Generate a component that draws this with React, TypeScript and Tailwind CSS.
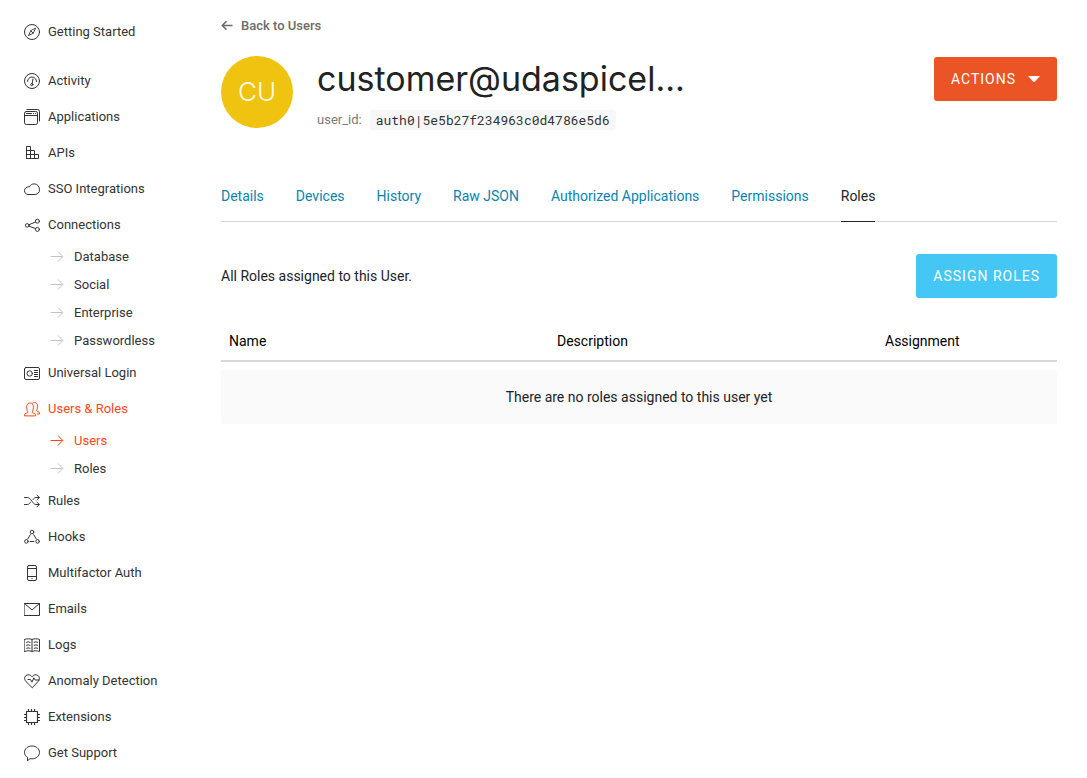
import type { ReactNode } from "react";

function Icon({ children }: { children: ReactNode }) {
  return (
    <svg
      viewBox="0 0 16 16"
      className="size-4 shrink-0"
      fill="none"
      stroke="currentColor"
      strokeWidth="1"
      strokeLinecap="round"
      strokeLinejoin="round"
      aria-hidden="true"
    >
      {children}
    </svg>
  );
}

const icons: Record<string, ReactNode> = {
  compass: (
    <>
      <circle cx="8" cy="8" r="7.5" />
      <path d="M11.6 4.4 9.2 9.2 4.4 11.6 6.8 6.8zM6.8 6.8l2.4 2.4" strokeWidth="0.9" />
    </>
  ),
  gauge: (
    <>
      <circle cx="8" cy="8" r="7.5" />
      <path d="M3.5 8.500a4.500 4.500 0 0 1 9 0M8.900 6 8.200 10.400" />
      <circle cx="7.800" cy="11.600" r="1.100" />
    </>
  ),
  windows: (
    <>
      <rect x="0.5" y="2.5" width="13" height="13" rx="1.8" />
      <path d="M0.5 6.5h13M3 .5h10.5a2 2 0 0 1 2 2V12" />
      <path d="M2.5 4.5h5M9.500 4.500h.2M11.500 4.500h.2" />
    </>
  ),
  blocks: (
    <path
      d="M2.500 1.500h4v12h-4zM2.500 5.500h8v8M2.500 9.500h12v4h-12M6.500 5.500v8M10.500 9.500v4"
      strokeLinejoin="miter"
      strokeLinecap="butt"
    />
  ),
  cloud: (
    <path d="M4.2 13.500h7A4.500 4.500 0 0 0 15.500 8.700c0-3.300-2.200-5.800-5.200-5.800C8 2.900 6.300 4 5.500 5.800 2.600 5.500.500 7.400.500 9.700c0 2.200 1.500 3.800 3.700 3.800z" />
  ),
  share: (
    <>
      <circle cx="3.2" cy="8.400" r="1.800" />
      <circle cx="13.400" cy="4.200" r="2" />
      <circle cx="13.400" cy="12.400" r="2" />
      <path d="m5 7.700 6.600-2.700M5 9.200l6.600 2.400" />
    </>
  ),
  card: (
    <>
      <rect x="0.5" y="2.500" width="15" height="12" rx="1.500" />
      <circle cx="5.700" cy="8.500" r="2.700" />
      <path d="M10 5.500h4M10 7.500h4M10 9.500h4M10 11.500h4" strokeLinecap="butt" />
    </>
  ),
  users: (
    <>
      <path d="M.5 14.500v-1.200c0-.900 3.400-1.100 3.400-2.200C3.200 10 2.800 8.700 2.600 6.600 2.400 3.700 3.700 2 6 2s3.600 1.700 3.400 4.600C9.200 8.700 8.800 10 8.100 11.100c0 1.100 3.400 1.300 3.400 2.200v1.200z" />
      <path d="M8.600 2.100C9.200 1.700 9.800 1.500 10.500 1.500c2 0 3.200 1.500 3 4.100-.1 1.900-.5 3.100-1.100 4 0 1.200 3.100 1.200 3.100 2.200v1.200h-2" />
    </>
  ),
  shuffle: (
    <path d="M.5 4.500h3c3.500 0 5 7 8.500 7h3M.5 11.500h3c1.300 0 2.200-1 3-2.100M9 6.500c.8-1.100 1.700-2 3-2h3.300M13 2.200l2.400 2.300L13 6.800M13 9.200l2.400 2.300-2.400 2.300" />
  ),
  hook: (
    <>
      <circle cx="8" cy="3" r="1.800" />
      <circle cx="2.400" cy="12.400" r="1.800" />
      <circle cx="13.600" cy="12.400" r="1.800" />
      <path d="M6.300 5.800 3.800 9.800M9.700 5.800l2.500 4M6.200 12.500h3.600" />
    </>
  ),
  phone: (
    <>
      <rect x="3.500" y="0.500" width="9" height="15" rx="1.500" />
      <path d="M3.500 3.500h9M3.500 11.500h9M8 13.500h.1" />
    </>
  ),
  mail: (
    <path d="M.5 2.500h15v12H.5zM.5 2.500 8 9l7.500-6.500" strokeLinejoin="miter" />
  ),
  book: (
    <>
      <path d="M.5 2.500C3 1.500 5.500 1.500 8 2.500c2.500-1 5-1 7.500 0v12c-2.500-1-5-1-7.500 0-2.500-1-5-1-7.500 0zM8 2.500v12" />
      <path d="M2.500 5.200q1.700-.8 3.400 0M2.500 8.200q1.700-.8 3.400 0M2.500 11.200q1.700-.8 3.400 0M10.200 5.200q1.700-.8 3.400 0M10.200 8.200q1.700-.8 3.400 0M10.200 11.200q1.700-.8 3.400 0" />
    </>
  ),
  heart: (
    <>
      <path d="M8 14.500 2 8.600C-.2 6 .6 3.500 2 2.500c2-1.400 4.700-.8 6 1.300 1.300-2.100 4-2.700 6-1.300 1.400 1 2.200 3.500 0 6.100z" />
      <path d="M4 6.500h2.500L8 9.200l1.800-4.400 1.400 2.200h4" />
    </>
  ),
  chip: (
    <path
      d="M2.500 2.500h11v11h-11zM4.500 0v2.500M7.500 0v2.500M10.500 0v2.500M4.500 13.500V16M7.500 13.500V16M10.500 13.500V16M0 5.500h2.500M0 8.500h2.500M0 11.500h2.500M13.500 5.500H16M13.500 8.500H16M13.500 11.500H16"
      strokeLinecap="butt"
      strokeWidth="1.2"
    />
  ),
  chat: (
    <path d="M3.500 15.500v-3.100C1.600 11.300.5 9.500.5 7.400.5 3.800 3.800 1 8 1s7.500 2.800 7.500 6.400-3.300 6.400-7.500 6.400c-.6 0-1.100 0-1.600-.1z" />
  ),
};

type NavEntry = { label: string; icon: string; children?: string[] };

const nav: NavEntry[] = [
  { label: "Activity", icon: "gauge" },
  { label: "Applications", icon: "windows" },
  { label: "APIs", icon: "blocks" },
  { label: "SSO Integrations", icon: "cloud" },
  {
    label: "Connections",
    icon: "share",
    children: ["Database", "Social", "Enterprise", "Passwordless"],
  },
  { label: "Universal Login", icon: "card" },
  { label: "Users & Roles", icon: "users", children: ["Users", "Roles"] },
  { label: "Rules", icon: "shuffle" },
  { label: "Hooks", icon: "hook" },
  { label: "Multifactor Auth", icon: "phone" },
  { label: "Emails", icon: "mail" },
  { label: "Logs", icon: "book" },
  { label: "Anomaly Detection", icon: "heart" },
  { label: "Extensions", icon: "chip" },
  { label: "Get Support", icon: "chat" },
];

const tabs = [
  "Details",
  "Devices",
  "History",
  "Raw JSON",
  "Authorized Applications",
  "Permissions",
  "Roles",
];

function NavItem({ label, icon, children }: NavEntry) {
  const active = label === "Users & Roles";
  return (
    <li>
      <a
        href="#"
        className={`flex h-9 items-center gap-2 ${active ? "text-[#ff4719]" : "text-[#333]"}`}
      >
        <Icon>{icons[icon]}</Icon>
        {label}
      </a>
      {children && (
        <ul>
          {children.map((child) => (
            <li key={child}>
              <a
                href="#"
                className={`flex h-7 items-center gap-2.5 pl-[26px] ${
                  child === "Users" ? "text-[#ff4719]" : "text-[#333]"
                }`}
              >
                <span className={child === "Users" ? "text-[#ff4719]" : "text-[#c4c4c4]"}>
                  <svg
                    viewBox="0 0 14 14"
                    className="size-3.5"
                    fill="none"
                    stroke="currentColor"
                    aria-hidden="true"
                  >
                    <path d="M.5 6.500h12M8 1.500l4.800 5L8 11.500" />
                  </svg>
                </span>
                {child}
              </a>
            </li>
          ))}
        </ul>
      )}
    </li>
  );
}

export default function App() {
  return (
    <div className="flex min-h-screen bg-white font-['Roboto','Liberation_Sans',sans-serif] text-sm text-[#222228]">
      <nav aria-label="Main" className="w-[221px] shrink-0 pt-3.5 pl-6 text-[13px]">
        <ul>
          <li className="mb-[13px]">
            <a href="#" className="flex h-9 items-center gap-2 text-[#333]">
              <Icon>{icons.compass}</Icon>
              Getting Started
            </a>
          </li>
          {nav.map((entry) => (
            <NavItem key={entry.label} {...entry} />
          ))}
        </ul>
      </nav>

      <main className="min-w-0 flex-1 pt-4 pr-[30px]">
        <a href="#" className="flex h-5 w-fit items-center gap-2 text-[13px] font-medium text-[#6b6b6b]">
          <svg
            viewBox="0 0 12 12"
            className="size-3"
            fill="none"
            stroke="currentColor"
            strokeWidth="1.6"
            aria-hidden="true"
          >
            <path d="M11.500 5.500H1.500M5.500 1.300 1.300 5.500l4.200 4.200" />
          </svg>
          Back to Users
        </a>

        <header className="mt-5 flex items-start gap-6">
          <div className="flex size-[72px] shrink-0 items-center justify-center rounded-full bg-[#f0c310] font-['Inter',sans-serif] text-[26px] font-light text-[#fffbe6]">
            CU
          </div>
          <div className="min-w-0 flex-1">
            <h1 className="truncate font-['Inter',sans-serif] text-[34px] leading-[46px] text-[#222]">
              customer@udaspicel...
            </h1>
            <p className="mt-2 flex items-center gap-2 text-[13px] text-[#7a7a7a]">
              user_id:
              <code className="rounded-[3px] bg-[#f5f7f9] px-1.5 font-['Roboto_Mono','Liberation_Mono',monospace] leading-5 text-[#333]">
                auth0|5e5b27f234963c0d4786e5d6
              </code>
            </p>
          </div>
          <button
            type="button"
            className="mt-px flex h-11 items-center gap-3 rounded-[3px] bg-[#eb5424] px-[17px] tracking-[1px] text-white"
          >
            ACTIONS
            <svg viewBox="0 0 12 6" className="h-1.5 w-3" fill="currentColor" aria-hidden="true">
              <path d="M0 0h12L7 5.500q-1 .8-2 0z" />
            </svg>
          </button>
        </header>

        <div className="mt-[50px] flex gap-8 border-b border-[#d8d8d8]" role="tablist">
          {tabs.map((tab) => (
            <button
              key={tab}
              type="button"
              role="tab"
              aria-selected={tab === "Roles"}
              className={`-mb-px border-b pt-1.5 pb-[15px] ${
                tab === "Roles" ? "border-[#222228] text-[#222228]" : "border-transparent text-[#0a84ae]"
              }`}
            >
              {tab}
            </button>
          ))}
        </div>

        <div className="mt-8 flex items-center justify-between">
          <p>All Roles assigned to this User.</p>
          <button
            type="button"
            className="h-11 rounded-[3px] bg-[#44c7f4] px-[17px] tracking-[1px] text-white"
          >
            ASSIGN ROLES
          </button>
        </div>

        <table className="mt-6 w-full table-fixed text-left">
          <thead>
            <tr className="border-b-2 border-[#d8d8d8] text-black">
              <th scope="col" className="h-[39px] px-2 font-normal">Name</th>
              <th scope="col" className="px-2 font-normal">Description</th>
              <th scope="col" className="w-[180px] px-2 font-normal">Assignment</th>
            </tr>
          </thead>
          <tbody>
            <tr>
              <td colSpan={3} className="pt-2">
                <p className="rounded-[3px] bg-[#fafafa] py-[17px] text-center">
                  There are no roles assigned to this user yet
                </p>
              </td>
            </tr>
          </tbody>
        </table>
      </main>
    </div>
  );
}
